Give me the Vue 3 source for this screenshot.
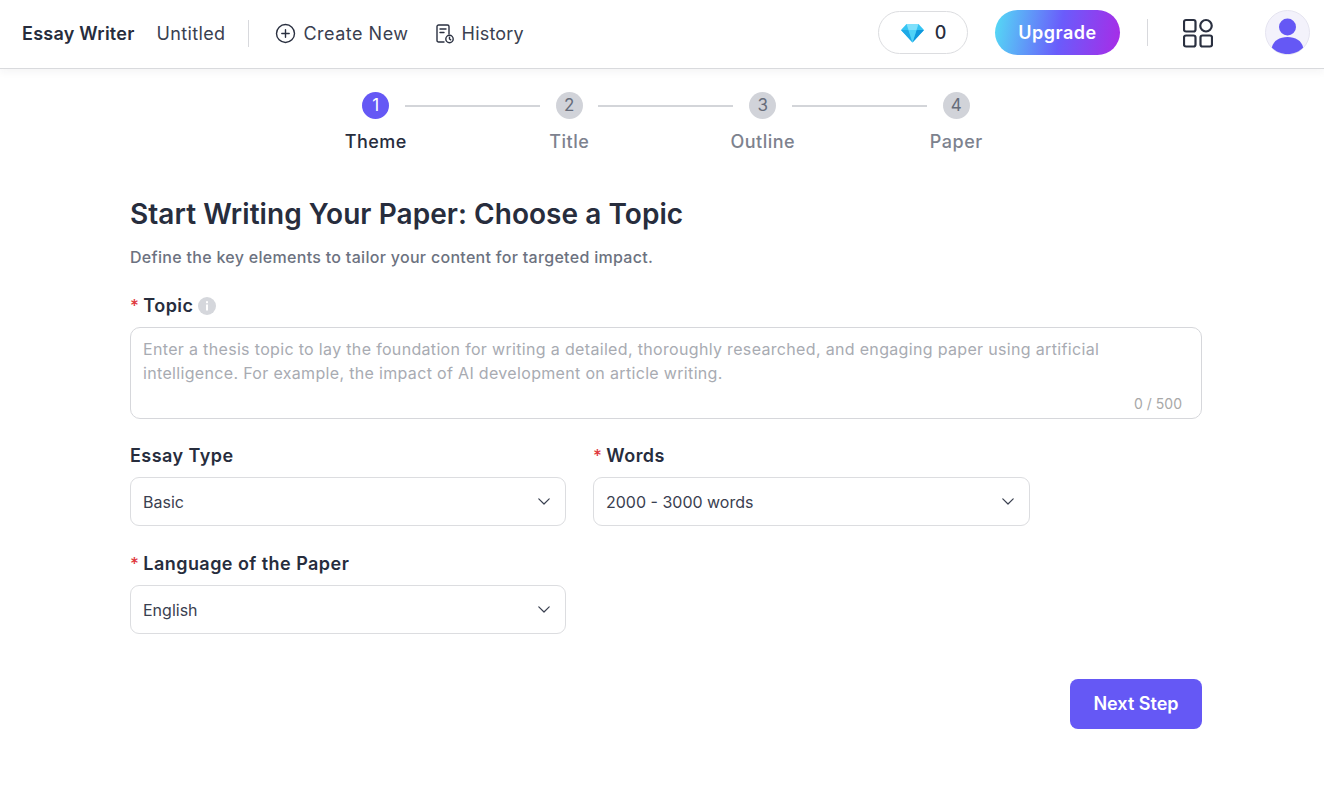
<script setup>
const steps = [
  { n: 1, label: 'Theme', active: true },
  { n: 2, label: 'Title' },
  { n: 3, label: 'Outline' },
  { n: 4, label: 'Paper' }
]
</script>

<template>
  <div class="page">
    <header class="topbar">
      <div class="left">
        <span class="brand">Essay Writer</span>
        <span class="doc">Untitled</span>
        <span class="vline"></span>
        <a class="navlink create">
          <svg width="21" height="21" viewBox="0 0 21 21" fill="none" stroke="#2a3040" stroke-width="1.4" stroke-linecap="round"><circle cx="10.5" cy="10.5" r="9"/><path d="M10.5 6.8v7.4M6.8 10.5h7.4"/></svg>
          <span>Create New</span>
        </a>
        <a class="navlink history">
          <svg width="19" height="21" viewBox="0 0 19 21" fill="none" stroke="#2a3040" stroke-width="1.4" stroke-linecap="round" stroke-linejoin="round"><path d="M9 19H3.600C2.700 19 2 18.300 2 17.400V3.600C2 2.700 2.700 2 3.600 2h8.800c.9 0 1.600.7 1.600 1.600V11"/><path d="M5 6h6M5 9.500h4"/><circle cx="14.500" cy="16" r="3.700"/><path d="M14.500 14.300V16l1.200.8"/></svg>
          <span>History</span>
        </a>
      </div>
      <div class="right">
        <div class="credits">
          <svg width="25" height="20" viewBox="0 0 25 20"><path d="M6.500 1h12L24 7 12.500 19.500 1 7z" fill="#35c4f3"/><path d="M6.500 1 8.500 7h8l2-6z" fill="#7fe0fb"/><path d="M1 7h7.500l4 12.500z" fill="#1fa9e6"/><path d="M24 7h-7.500l-4 12.500z" fill="#0f97dc"/><path d="M8.500 7h8l-4 12.500z" fill="#4fd2f7"/></svg>
          <span>0</span>
        </div>
        <button class="upgrade">Upgrade</button>
        <span class="vline right-line"></span>
        <svg class="apps" width="30" height="30" viewBox="0 0 30 30" fill="none" stroke="#2a3040" stroke-width="2.200"><rect x="1" y="2" width="11.500" height="11.500" rx="2"/><circle cx="23" cy="7.750" r="5.750"/><rect x="1" y="17.500" width="11.500" height="11" rx="2"/><rect x="17.500" y="17.500" width="11.500" height="11" rx="2"/></svg>
        <div class="avatar">
          <svg width="45" height="45" viewBox="0 0 45 45"><circle cx="22.500" cy="22.500" r="22" fill="#f3f2fb" stroke="#e5e4f0"/><circle cx="22.500" cy="17" r="8.500" fill="#6558f5"/><path d="M6.800 37.500C8.500 30.500 14.500 27 22.500 27s14 3.500 15.700 10.500C34.200 41.800 28.800 44 22.500 44S10.800 41.800 6.800 37.500z" fill="#6558f5"/></svg>
        </div>
      </div>
    </header>

    <main class="content">
      <ol class="stepper">
        <li v-for="(s, i) in steps" :key="s.n" class="step" :class="{ active: s.active }">
          <span v-if="i < steps.length - 1" class="connector"></span>
          <span class="dot">{{ s.n }}</span>
          <span class="label">{{ s.label }}</span>
        </li>
      </ol>

      <h1 class="title">Start Writing Your Paper: Choose a Topic</h1>
      <p class="subtitle">Define the key elements to tailor your content for targeted impact.</p>

      <div class="field-label topic-label">
        <span><i class="req">*</i>Topic</span>
        <svg class="info" width="18" height="18" viewBox="0 0 18 18"><circle cx="9" cy="9" r="9" fill="#d5d7dc"/><rect x="8" y="7.500" width="2" height="6" fill="#fff"/><rect x="8" y="4.200" width="2" height="2" fill="#fff"/></svg>
      </div>
      <div class="textarea">
        <p class="placeholder">Enter a thesis topic to lay the foundation for writing a detailed, thoroughly researched, and engaging paper using artificial intelligence. For example, the impact of AI development on article writing.</p>
        <span class="count">0 / 500</span>
      </div>

      <div class="row">
        <div class="col">
          <div class="field-label"><span>Essay Type</span></div>
          <div class="select">
            <span>Basic</span>
            <svg width="12" height="7" viewBox="0 0 12 7" fill="none" stroke="#3a4050" stroke-width="1.200" stroke-linecap="round" stroke-linejoin="round"><path d="M.8.8 6 6 11.200.8"/></svg>
          </div>
        </div>
        <div class="col">
          <div class="field-label"><span><i class="req">*</i>Words</span></div>
          <div class="select">
            <span>2000 - 3000 words</span>
            <svg width="12" height="7" viewBox="0 0 12 7" fill="none" stroke="#3a4050" stroke-width="1.200" stroke-linecap="round" stroke-linejoin="round"><path d="M.8.8 6 6 11.200.8"/></svg>
          </div>
        </div>
      </div>

      <div class="row lang">
        <div class="col">
          <div class="field-label"><span><i class="req">*</i>Language of the Paper</span></div>
          <div class="select">
            <span>English</span>
            <svg width="12" height="7" viewBox="0 0 12 7" fill="none" stroke="#3a4050" stroke-width="1.200" stroke-linecap="round" stroke-linejoin="round"><path d="M.8.8 6 6 11.200.8"/></svg>
          </div>
        </div>
      </div>

      <div class="actions">
        <button class="next">Next Step</button>
      </div>
    </main>
  </div>
</template>

<style>
html, body { margin: 0; background: #fff; }
</style>

<style scoped>
.page {
  width: 1324px;
  height: 807px;
  overflow: hidden;
  background: #fff;
  font-family: Inter, "Open Sans", "Liberation Sans", sans-serif;
  color: #272d3d;
}
.topbar {
  height: 65px;
  padding: 0 14px 3px 22px;
  border-bottom: 1px solid #d9dadd;
  box-shadow: 0 3px 8px rgba(30, 30, 60, 0.05);
  display: flex;
  align-items: center;
  justify-content: space-between;
}
.left, .right { display: flex; align-items: center; }
.left { padding-top: 1px; }
.brand { font-size: 18px; font-weight: 600; letter-spacing: 0.25px; }
.doc { font-size: 18px; margin-left: 22px; color: #3a4050; letter-spacing: 0.35px; }
.vline { width: 1px; height: 27px; background: #d8d9dd; }
.left .vline { margin-left: 23px; }
.navlink { display: flex; align-items: center; font-size: 18px; color: #3a4050; gap: 7px; }
.create { margin-left: 26px; letter-spacing: 0.5px; }
.history { margin-left: 26px; gap: 8px; letter-spacing: 0.2px; }
.credits {
  width: 90px;
  height: 43px;
  box-sizing: border-box;
  border: 1px solid #dcdde0;
  border-radius: 22px;
  display: flex;
  align-items: center;
  justify-content: center;
  gap: 10px;
  font-size: 18px;
  font-weight: 500;
}
.upgrade {
  margin-left: 27px;
  width: 125px;
  height: 45px;
  border: 0;
  border-radius: 23px;
  background: linear-gradient(100deg, #54dcf5 0%, #6a5cfb 52%, #a92be6 100%);
  color: #fff;
  font: 600 18px Inter, sans-serif;
  letter-spacing: 0.5px;
  padding: 0;
}
.right-line { margin-left: 27px; }
.apps { margin-left: 35px; }
.avatar { margin-left: 52px; width: 45px; height: 45px; }

.content { width: 1072px; margin-left: 130px; }
.stepper {
  list-style: none;
  margin: 0;
  padding: 23px 0 0;
  display: flex;
  justify-content: center;
}
.step {
  position: relative;
  width: 193.500px;
  display: flex;
  flex-direction: column;
  align-items: center;
  color: #7d828e;
}
.connector {
  position: absolute;
  top: 12.500px;
  left: calc(50% + 29px);
  width: 135px;
  height: 2px;
  background: #d3d5d9;
}
.dot {
  width: 27px;
  height: 27px;
  border-radius: 50%;
  background: #d1d3d9;
  color: #666c7a;
  font-size: 17px;
  line-height: 27px;
  text-align: center;
}
.label { margin-top: 9px; font-size: 18px; line-height: 27px; font-weight: 500; letter-spacing: 0.5px; }
.step.active { color: #272d3d; }
.step.active .dot { background: #6558f5; color: #fff; }
.title { margin: 39px 0 0; font-size: 28px; line-height: 40px; font-weight: 600; letter-spacing: 0.05px; }
.subtitle { margin: 11px 0 0; font-size: 16px; line-height: 24px; color: #6c7280; font-weight: 500; letter-spacing: 0.3px; }
.field-label { font-size: 18px; line-height: 26px; font-weight: 600; display: flex; align-items: center; gap: 5px; height: 26px; letter-spacing: 0.45px; }
.req { color: #e0393e; font-style: normal; font-weight: 500; font-size: 17px; margin-right: 4px; }
.topic-label { margin-top: 24px; }
.textarea {
  position: relative;
  margin-top: 8px;
  height: 92px;
  box-sizing: border-box;
  border: 1px solid #d6d7db;
  border-radius: 10px;
  padding: 9px 12px;
}
.placeholder { margin: 0; font-size: 16px; line-height: 24px; color: #a8abb2; max-width: 990px; letter-spacing: 0.33px; }
.count { position: absolute; right: 19px; bottom: 4px; font-size: 14px; color: #a8a8a8; line-height: 20px; }
.row { display: grid; grid-template-columns: 436px 437px; column-gap: 27px; margin-top: 24px; }
.row.lang { margin-top: 25px; }
.col .select { margin-top: 8px; }
.select {
  height: 49px;
  box-sizing: border-box;
  border: 1px solid #dcdde0;
  border-radius: 9px;
  padding: 0 15px 0 12px;
  display: flex;
  align-items: center;
  justify-content: space-between;
  font-size: 16px;
  color: #3a4050;
}
.actions { display: flex; justify-content: flex-end; margin-top: 45px; }
.next {
  width: 132px;
  height: 50px;
  border: 0;
  border-radius: 8px;
  background: #6558f5;
  color: #fff;
  font: 600 18px Inter, sans-serif;
  padding: 0 0 2px;
}
</style>
